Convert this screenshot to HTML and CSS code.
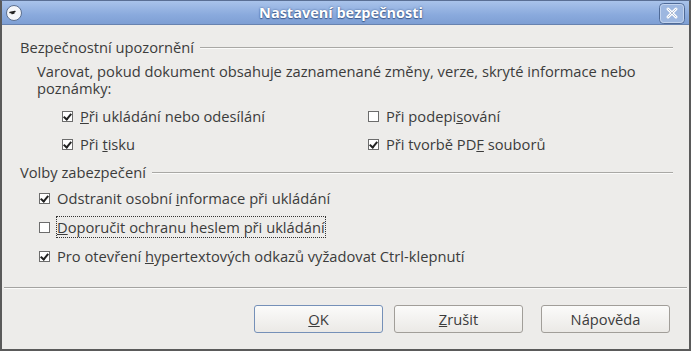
FILE: index.html
```html
<!DOCTYPE html>
<html>
<head>
<meta charset="utf-8">
<link rel="stylesheet" href="styles.css">
</head>
<body>
<div class="window">
  <div class="titlebar">
    <div class="app-icon">
      <svg width="18" height="18" viewBox="0 0 18 18"><circle cx="9" cy="9" r="7.5" fill="#f4f6fa" stroke="#5b6f8f" stroke-width="1"/><path d="M5 8.5 L10 7.5 M7 9.5 L9 9" stroke="#222" stroke-width="1.4" stroke-linecap="round"/></svg>
    </div>
    <div class="title">Nastavení bezpečnosti</div>
    <div class="close-btn">
      <svg width="26" height="21" viewBox="0 0 26 21"><rect x="0.5" y="0.5" width="25" height="20" rx="4" fill="#9db7e0" stroke="#4f6a97"/><rect x="1.5" y="1.5" width="23" height="18" rx="3" fill="none" stroke="#c3d4ef"/><path d="M9 6 L17 14 M17 6 L9 14" stroke="#fff" stroke-width="3" stroke-linecap="round"/><path d="M9 6 L17 14 M17 6 L9 14" stroke="#5f7aa5" stroke-width="0.8" stroke-linecap="round" opacity="0.6"/></svg>
    </div>
  </div>
  <div class="content">
    <div class="section-head"><span>Bezpečnostní upozornění</span><div class="rule"></div></div>
    <div class="para">Varovat, pokud dokument obsahuje zaznamenané změny, verze, skryté informace nebo poznámky:</div>
    <div class="grid">
      <div class="opt"><span class="cb checked"></span><span><u>P</u>ři ukládání nebo odesílání</span></div>
      <div class="opt"><span class="cb"></span><span>Při podepi<u>s</u>ování</span></div>
      <div class="opt"><span class="cb checked"></span><span>Při <u>t</u>isku</span></div>
      <div class="opt"><span class="cb checked"></span><span>Při tvorbě PD<u>F</u> souborů</span></div>
    </div>
    <div class="section-head second"><span>Volby zabezpečení</span><div class="rule"></div></div>
    <div class="list">
      <div class="opt"><span class="cb checked"></span><span>Odstranit osobní <u>i</u>nformace při ukládání</span></div>
      <div class="opt"><span class="cb"></span><span class="focus"><u>D</u>oporučit ochranu heslem při ukládání</span></div>
      <div class="opt"><span class="cb checked"></span><span>Pro otevření <u>h</u>ypertextových odkazů vyžadovat Ctrl-klepnutí</span></div>
    </div>
  </div>
  <div class="sep"></div>
  <div class="buttons">
    <button class="btn default"><u>O</u>K</button>
    <button class="btn"><u>Z</u>rušit</button>
    <button class="btn help">Nápověda</button>
  </div>
</div>
</body>
</html>
```
FILE: styles.css
```css
html, body { margin: 0; padding: 0; }
body { width: 691px; height: 351px; overflow: hidden; font-family: "Open Sans", "DejaVu Sans", sans-serif; font-size: 14.7px; color: #3c3c3c; }
.window { box-sizing: border-box; width: 691px; height: 351px; background: #edecea; border: 2px solid #5a5a5a; border-top: 1px solid #5a6f94; display: flex; flex-direction: column; }
.titlebar { height: 23px; flex: none; display: flex; align-items: center; background: linear-gradient(#a9c3ea, #8aaadd 60%, #7e9fd4); border-bottom: 1px solid #6883b0; position: relative; padding: 0 4px 0 3px; }
.app-icon { width: 18px; height: 18px; }
.title { flex: 1; text-align: center; color: #fff; font-weight: bold; font-size: 14.5px; text-shadow: 0 0 2px #3d5a8c, 0 1px 1px #3d5a8c; }
.close-btn { width: 26px; height: 21px; margin-top: 1px; }
.content { flex: 1; padding: 13px 16px 0 18px; }
.section-head { display: flex; align-items: center; gap: 6px; height: 18px; }
.section-head .rule { flex: 1; height: 0; border-top: 1px solid #a9a8a5; border-bottom: 1px solid #fbfbfa; margin-top: 1px; }
.para { margin: 7px 0 0 17px; line-height: 17px; width: 610px; }
.grid { display: grid; grid-template-columns: 306px auto; margin: 10px 0 0 42px; row-gap: 10px; }
.opt { display: flex; align-items: center; height: 18px; gap: 7px; }
.cb { width: 11px; height: 11px; box-sizing: border-box; border: 1px solid #6c6c6c; background: #fff; flex: none; position: relative; }
.cb.checked::after { content: ""; position: absolute; left: 2px; top: 0px; width: 3px; height: 6px; border: solid #222; border-width: 0 2px 2px 0; transform: rotate(40deg); }
.second { margin-top: 10px; }
.list { margin: 8px 0 0 19px; display: flex; flex-direction: column; gap: 11px; }
.focus { outline: 1px dotted #333; outline-offset: 0; }
.sep { height: 0; margin: 0 2px; border-top: 1px solid #a4a3a1; border-bottom: 1px solid #fbfbfa; }
.buttons { height: 60px; display: flex; justify-content: flex-end; align-items: center; padding-right: 19px; gap: 11px; }
.btn { width: 129px; height: 28px; font-family: inherit; font-size: 14.7px; color: #3c3c3c; border: 1px solid #a19e99; border-radius: 3px; background: linear-gradient(#fbfbfa, #ebe9e6); padding: 0; }
.btn.default { border-color: #7590b8; }
.btn.help { margin-left: 7px; }
```
